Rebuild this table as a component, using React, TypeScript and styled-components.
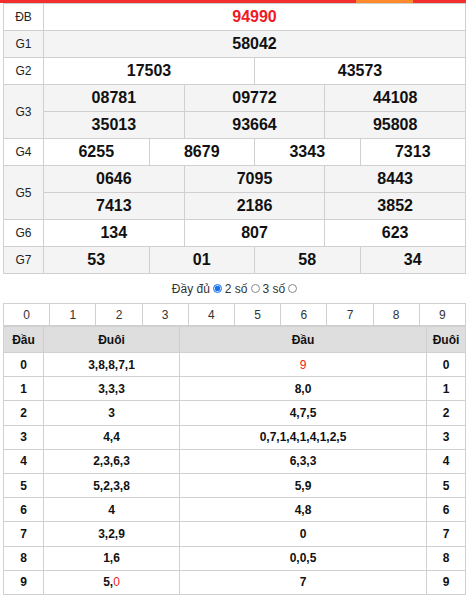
import React from "react";
import styled, { createGlobalStyle } from "styled-components";

const Global = createGlobalStyle`
  html, body { margin: 0; padding: 0; background: #fff; }
  body { font-family: "Liberation Sans", Arial, sans-serif; color: #111; }
`;

const Page = styled.div`
  width: 470px;
`;

const TopBar = styled.div`
  width: 466px;
  height: 3px;
  background: #f42e2e;
  display: flex;
  justify-content: flex-end;
  padding-right: 53px;
  box-sizing: border-box;
`;

const TopAccent = styled.div`
  width: 57px;
  height: 3px;
  background: #ff8a2b;
`;

const Board = styled.div`
  margin-left: 3px;
  width: 463px;
  box-sizing: border-box;
  border-left: 1px solid #d0d0d0;
  border-top: 1px solid #d0d0d0;
`;

const PrizeRow = styled.div<{ $alt?: boolean }>`
  display: grid;
  grid-template-columns: 40px 1fr;
  background: ${(p) => (p.$alt ? "#f4f4f4" : "#fff")};
`;

const Label = styled.div`
  box-sizing: border-box;
  border-right: 1px solid #d0d0d0;
  border-bottom: 1px solid #d0d0d0;
  display: flex;
  align-items: center;
  justify-content: center;
  font-size: 12px;
  color: #222;
`;

const Cells = styled.div<{ $cols: number }>`
  display: grid;
  grid-template-columns: repeat(${(p) => p.$cols}, 1fr);
`;

const Cell = styled.div<{ $red?: boolean }>`
  box-sizing: border-box;
  height: 27px;
  border-right: 1px solid #d0d0d0;
  border-bottom: 1px solid #d0d0d0;
  display: flex;
  align-items: center;
  justify-content: center;
  font-size: 16px;
  font-weight: bold;
  color: ${(p) => (p.$red ? "#ee1c25" : "#111")};
`;

const Options = styled.div`
  height: 29px;
  display: flex;
  align-items: center;
  justify-content: center;
  font-size: 12px;
  color: #333;
  padding-left: 2px;
`;

const Radio = styled.span<{ $on?: boolean }>`
  display: inline-block;
  box-sizing: border-box;
  width: 9px;
  height: 9px;
  border-radius: 50%;
  margin: 0 3px 0 3px;
  border: 1px solid ${(p) => (p.$on ? "#1a73e8" : "#8a8a8a")};
  background: ${(p) =>
    p.$on ? "radial-gradient(circle, #1a73e8 0 2.5px, #cfe0fa 3px)" : "#fff"};
`;

const LotoBoard = styled(Board)``;

const HeadRow = styled.div`
  display: grid;
  grid-template-columns: repeat(10, 1fr);
`;

const HeadCell = styled.div`
  box-sizing: border-box;
  height: 23px;
  border-right: 1px solid #d0d0d0;
  border-bottom: 2px solid #d0d0d0;
  display: flex;
  align-items: center;
  justify-content: center;
  font-size: 12px;
  color: #333;
`;

const LotoGrid = styled.div`
  display: grid;
  grid-template-columns: 40px 136px 247px 39px;
  grid-template-rows: 26px repeat(10, 24.2px);
`;

const LotoCell = styled.div<{ $head?: boolean }>`
  box-sizing: border-box;
  border-right: 1px solid #d0d0d0;
  border-bottom: 1px solid #d0d0d0;
  display: flex;
  align-items: center;
  justify-content: center;
  font-size: 12px;
  font-weight: bold;
  color: #111;
  background: ${(p) => (p.$head ? "#dedede" : "#fff")};
`;

const Red = styled.span`
  color: #ee1c25;
  font-weight: normal;
`;

type Prize = { label: string; rows: string[][]; cols: number; red?: boolean };

const prizes: Prize[] = [
  { label: "ĐB", rows: [["94990"]], cols: 1, red: true },
  { label: "G1", rows: [["58042"]], cols: 1 },
  { label: "G2", rows: [["17503", "43573"]], cols: 2 },
  {
    label: "G3",
    rows: [
      ["08781", "09772", "44108"],
      ["35013", "93664", "95808"],
    ],
    cols: 3,
  },
  { label: "G4", rows: [["6255", "8679", "3343", "7313"]], cols: 4 },
  {
    label: "G5",
    rows: [
      ["0646", "7095", "8443"],
      ["7413", "2186", "3852"],
    ],
    cols: 3,
  },
  { label: "G6", rows: [["134", "807", "623"]], cols: 3 },
  { label: "G7", rows: [["53", "01", "58", "34"]], cols: 4 },
];

type Part = { t: string; red?: boolean };
const loto: { d: string; tail: Part[]; head: Part[] }[] = [
  { d: "0", tail: [{ t: "3,8,8,7,1" }], head: [{ t: "9", red: true }] },
  { d: "1", tail: [{ t: "3,3,3" }], head: [{ t: "8,0" }] },
  { d: "2", tail: [{ t: "3" }], head: [{ t: "4,7,5" }] },
  { d: "3", tail: [{ t: "4,4" }], head: [{ t: "0,7,1,4,1,4,1,2,5" }] },
  { d: "4", tail: [{ t: "2,3,6,3" }], head: [{ t: "6,3,3" }] },
  { d: "5", tail: [{ t: "5,2,3,8" }], head: [{ t: "5,9" }] },
  { d: "6", tail: [{ t: "4" }], head: [{ t: "4,8" }] },
  { d: "7", tail: [{ t: "3,2,9" }], head: [{ t: "0" }] },
  { d: "8", tail: [{ t: "1,6" }], head: [{ t: "0,0,5" }] },
  { d: "9", tail: [{ t: "5," }, { t: "0", red: true }], head: [{ t: "7" }] },
];

const renderParts = (parts: Part[]) =>
  parts.map((p, i) => (p.red ? <Red key={i}>{p.t}</Red> : <React.Fragment key={i}>{p.t}</React.Fragment>));

export default function App() {
  return (
    <Page>
      <Global />
      <TopBar>
        <TopAccent />
      </TopBar>
      <Board>
        {prizes.map((p, i) => (
          <PrizeRow key={p.label} $alt={i % 2 === 1}>
            <Label>{p.label}</Label>
            <Cells $cols={p.cols}>
              {p.rows.flat().map((n, j) => (
                <Cell key={j} $red={p.red}>
                  {n}
                </Cell>
              ))}
            </Cells>
          </PrizeRow>
        ))}
      </Board>
      <Options>
        Đầy đủ<Radio $on />2 số<Radio />3 số<Radio />
      </Options>
      <LotoBoard>
        <HeadRow>
          {Array.from({ length: 10 }, (_, i) => (
            <HeadCell key={i}>{i}</HeadCell>
          ))}
        </HeadRow>
        <LotoGrid>
          <LotoCell $head>Đầu</LotoCell>
          <LotoCell $head>Đuôi</LotoCell>
          <LotoCell $head>Đầu</LotoCell>
          <LotoCell $head>Đuôi</LotoCell>
          {loto.map((r) => (
            <React.Fragment key={r.d}>
              <LotoCell>{r.d}</LotoCell>
              <LotoCell>{renderParts(r.tail)}</LotoCell>
              <LotoCell>{renderParts(r.head)}</LotoCell>
              <LotoCell>{r.d}</LotoCell>
            </React.Fragment>
          ))}
        </LotoGrid>
      </LotoBoard>
    </Page>
  );
}
